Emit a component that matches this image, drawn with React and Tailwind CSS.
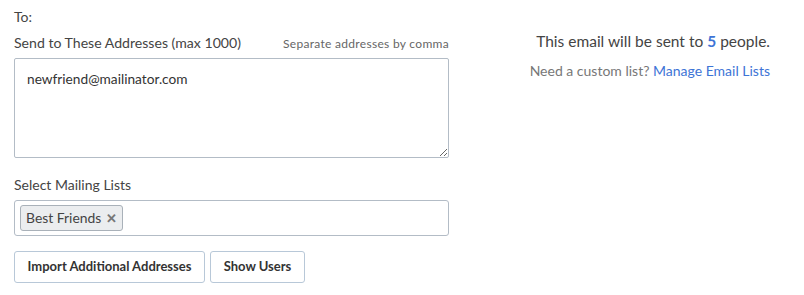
export default function App() {
  return (
    <div className="flex bg-white w-[804px] h-[295px] font-['Lato','Open_Sans',sans-serif] text-[#444]">
      <div className="w-[435px] ml-[14px] pt-[9px]">
        <p className="text-[14px] leading-[16px]">To:</p>
        <div className="flex items-end justify-between mt-[10px]">
          <label className="text-[14.1px] leading-[16px]">Send to These Addresses (max 1000)</label>
          <span className="text-[12px] leading-[14px] tracking-[0.3px] text-[#666]">Separate addresses by comma</span>
        </div>
        <textarea
          readOnly
          defaultValue="newfriend@mailinator.com"
          className="block mt-[7px] w-full h-[100px] border border-[#b3bcc6] rounded-[2px] px-[12px] py-[11px] text-[13.7px] leading-[18px] text-[#333] outline-none"
        />
        <p className="text-[14px] leading-[16px] mt-[19px]">Select Mailing Lists</p>
        <div className="mt-[7px] h-[36px] border border-[#b3bcc6] rounded-[3px] flex items-center px-[5px]">
          <span className="flex items-center gap-[5px] h-[26px] px-[5px] bg-[#ebedef] border border-[#a9b1b9] rounded-[3px] text-[13.9px] text-[#444]">
            Best Friends
            <span className="text-[#777] text-[13px] font-black leading-none">✕</span>
          </span>
        </div>
        <div className="flex gap-[5px] mt-[15px]">
          <button className="h-[32px] w-[191px] border border-[#b8c8d8] rounded-[3px] text-[13px] font-bold text-[#333]">
            Import Additional Addresses
          </button>
          <button className="h-[32px] w-[95px] border border-[#b8c8d8] rounded-[3px] text-[13px] font-bold text-[#333]">
            Show Users
          </button>
        </div>
      </div>
      <div className="flex-1 text-right pr-[34px] pt-[31px]">
        <p className="text-[15.5px] leading-[20px] text-[#444]">
          This email will be sent to <span className="font-bold text-[#3d74d6]">5</span> people.
        </p>
        <p className="text-[14px] leading-[18px] mt-[11px] text-[#777]">
          Need a custom list? <a className="text-[#3d74d6]">Manage Email Lists</a>
        </p>
      </div>
    </div>
  );
}
